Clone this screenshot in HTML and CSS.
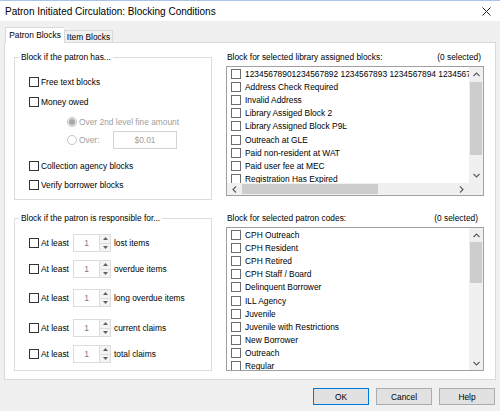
FILE: index.html
```html
<!DOCTYPE html>
<html>
<head>
<meta charset="utf-8">
<link rel="stylesheet" href="styles.css">
</head>
<body>
<div class="window">
  <div class="titlebar">
    <span class="title">Patron Initiated Circulation: Blocking Conditions</span>
    <svg class="close" width="9" height="9" viewBox="0 0 9 9"><path d="M0.5 0.5L8.5 8.5M8.5 0.5L0.5 8.5" stroke="#222" stroke-width="1" fill="none"/></svg>
  </div>
  <div class="tabs">
    <div class="tab active">Patron Blocks</div>
    <div class="tab">Item Blocks</div>
  </div>
  <div class="panel">
    <div class="left">
      <fieldset class="group g1">
        <legend>Block if the patron has...</legend>
        <div class="gbody">
          <div class="row"><span class="cb"></span><span class="lbl">Free text blocks</span></div>
          <div class="row m2"><span class="cb"></span><span class="lbl">Money owed</span></div>
          <div class="row m2 indent"><span class="radio checked"><span class="dot"></span></span><span class="lbl dis">Over 2nd level fine amount</span></div>
          <div class="row indent"><span class="radio"></span><span class="lbl dis over">Over:</span><span class="amount">$0.01</span></div>
          <div class="row m8"><span class="cb"></span><span class="lbl">Collection agency blocks</span></div>
          <div class="row m1"><span class="cb"></span><span class="lbl">Verify borrower blocks</span></div>
        </div>
      </fieldset>
      <fieldset class="group g2">
        <legend>Block if the patron is responsible for...</legend>
        <div class="gbody">
          <div class="row"><span class="cb"></span><span class="lbl least">At least</span><span class="spinval">1</span><span class="spinbtn"><span class="up"><svg width="5" height="3" viewBox="0 0 5 3"><path d="M0 3L2.5 0L5 3Z" fill="#606060"/></svg></span><span class="down"><svg width="5" height="3" viewBox="0 0 5 3"><path d="M0 0L2.5 3L5 0Z" fill="#606060"/></svg></span></span><span class="lbl what">lost items</span></div>
          <div class="row m8"><span class="cb"></span><span class="lbl least">At least</span><span class="spinval">1</span><span class="spinbtn"><span class="up"><svg width="5" height="3" viewBox="0 0 5 3"><path d="M0 3L2.5 0L5 3Z" fill="#606060"/></svg></span><span class="down"><svg width="5" height="3" viewBox="0 0 5 3"><path d="M0 0L2.5 3L5 0Z" fill="#606060"/></svg></span></span><span class="lbl what">overdue items</span></div>
          <div class="row m11"><span class="cb"></span><span class="lbl least">At least</span><span class="spinval">1</span><span class="spinbtn"><span class="up"><svg width="5" height="3" viewBox="0 0 5 3"><path d="M0 3L2.5 0L5 3Z" fill="#606060"/></svg></span><span class="down"><svg width="5" height="3" viewBox="0 0 5 3"><path d="M0 0L2.5 3L5 0Z" fill="#606060"/></svg></span></span><span class="lbl what">long overdue items</span></div>
          <div class="row m12"><span class="cb"></span><span class="lbl least">At least</span><span class="spinval">1</span><span class="spinbtn"><span class="up"><svg width="5" height="3" viewBox="0 0 5 3"><path d="M0 3L2.5 0L5 3Z" fill="#606060"/></svg></span><span class="down"><svg width="5" height="3" viewBox="0 0 5 3"><path d="M0 0L2.5 3L5 0Z" fill="#606060"/></svg></span></span><span class="lbl what">current claims</span></div>
          <div class="row m8"><span class="cb"></span><span class="lbl least">At least</span><span class="spinval">1</span><span class="spinbtn"><span class="up"><svg width="5" height="3" viewBox="0 0 5 3"><path d="M0 3L2.5 0L5 3Z" fill="#606060"/></svg></span><span class="down"><svg width="5" height="3" viewBox="0 0 5 3"><path d="M0 0L2.5 3L5 0Z" fill="#606060"/></svg></span></span><span class="lbl what">total claims</span></div>
        </div>
      </fieldset>
    </div>
    <div class="right">
      <div class="rlabel"><span>Block for selected library assigned blocks:</span><span>(0 selected)</span></div>
      <div class="listbox list1">
        <div class="items">
          <div class="item"><span class="icb"></span><span class="itxt">12345678901234567892 1234567893 1234567894 1234567895</span></div>
          <div class="item"><span class="icb"></span><span class="itxt">Address Check Required</span></div>
          <div class="item"><span class="icb"></span><span class="itxt">Invalid Address</span></div>
          <div class="item"><span class="icb"></span><span class="itxt">Library Assiged Block 2</span></div>
          <div class="item"><span class="icb"></span><span class="itxt">Library Assigned Block P9Ŀ</span></div>
          <div class="item"><span class="icb"></span><span class="itxt">Outreach at GLE</span></div>
          <div class="item"><span class="icb"></span><span class="itxt">Paid non-resident at WAT</span></div>
          <div class="item"><span class="icb"></span><span class="itxt">Paid user fee at MEC</span></div>
          <div class="item"><span class="icb"></span><span class="itxt">Registration Has Expired</span></div>
        </div>
        <div class="vscroll vs1">
          <span class="arrow"><svg width="7" height="5" viewBox="0 0 7 5"><path d="M0.5 4L3.5 1L6.5 4" stroke="#606060" stroke-width="1.2" fill="none"/></svg></span>
          <span class="vthumb t1"></span>
          <span class="fill"></span>
          <span class="arrow"><svg width="7" height="5" viewBox="0 0 7 5"><path d="M0.5 1L3.5 4L6.5 1" stroke="#606060" stroke-width="1.2" fill="none"/></svg></span>
        </div>
        <div class="hscroll">
          <span class="harrow"><svg width="5" height="7" viewBox="0 0 5 7"><path d="M4 0.5L1 3.5L4 6.5" stroke="#606060" stroke-width="1.2" fill="none"/></svg></span>
          <span class="hthumb"></span>
          <span class="fill"></span>
          <span class="harrow"><svg width="5" height="7" viewBox="0 0 5 7"><path d="M1 0.5L4 3.5L1 6.5" stroke="#606060" stroke-width="1.2" fill="none"/></svg></span>
        </div>
        <div class="corner"></div>
      </div>
      <div class="rlabel second"><span>Block for selected patron codes:</span><span>(0 selected)</span></div>
      <div class="listbox list2">
        <div class="items">
          <div class="item"><span class="icb"></span><span class="itxt">CPH Outreach</span></div>
          <div class="item"><span class="icb"></span><span class="itxt">CPH Resident</span></div>
          <div class="item"><span class="icb"></span><span class="itxt">CPH Retired</span></div>
          <div class="item"><span class="icb"></span><span class="itxt">CPH Staff / Board</span></div>
          <div class="item"><span class="icb"></span><span class="itxt">Delinquent Borrower</span></div>
          <div class="item"><span class="icb"></span><span class="itxt">ILL Agency</span></div>
          <div class="item"><span class="icb"></span><span class="itxt">Juvenile</span></div>
          <div class="item"><span class="icb"></span><span class="itxt">Juvenile with Restrictions</span></div>
          <div class="item"><span class="icb"></span><span class="itxt">New Borrower</span></div>
          <div class="item"><span class="icb"></span><span class="itxt">Outreach</span></div>
          <div class="item"><span class="icb"></span><span class="itxt">Regular</span></div>
        </div>
        <div class="vscroll vs2">
          <span class="arrow"><svg width="7" height="5" viewBox="0 0 7 5"><path d="M0.5 4L3.5 1L6.5 4" stroke="#606060" stroke-width="1.2" fill="none"/></svg></span>
          <span class="vthumb t2"></span>
          <span class="fill"></span>
          <span class="arrow"><svg width="7" height="5" viewBox="0 0 7 5"><path d="M0.5 1L3.5 4L6.5 1" stroke="#606060" stroke-width="1.2" fill="none"/></svg></span>
        </div>
      </div>
    </div>
  </div>
  <div class="footer">
    <div class="btn ok">OK</div>
    <div class="btn">Cancel</div>
    <div class="btn">Help</div>
  </div>
</div>
</body>
</html>
```

FILE: styles.css
```css
html, body {
  margin: 0;
  padding: 0;
}
body {
  width: 500px;
  height: 411px;
  overflow: hidden;
  background: #f0f0f0;
  font-family: "Liberation Sans", Arial, sans-serif;
  font-size: 8.4px;
  color: #000;
}
.window {
  width: 500px;
  height: 411px;
  display: flex;
  flex-direction: column;
}
.titlebar {
  box-sizing: border-box;
  height: 21px;
  background: #fff;
  border-top: 1px solid #a9c4e6;
  display: flex;
  align-items: center;
  justify-content: space-between;
  padding: 0 9px 0 5px;
}
.title {
  font-size: 10px;
  color: #000;
}
.close {
  display: block;
}
.tabs {
  height: 21px;
  display: flex;
  align-items: flex-end;
  padding-left: 5px;
}
.tab {
  box-sizing: border-box;
  height: 12px;
  width: 49px;
  border: 1px solid #d9d9d9;
  border-bottom: none;
  background: #f0f0f0;
  display: flex;
  align-items: center;
  justify-content: center;
  font-size: 8.4px;
}
.tab.active {
  position: relative;
  z-index: 1;
  height: 16px;
  width: 59px;
  margin-bottom: -1px;
  background: #fff;
  border-right: none;
  padding-bottom: 1px;
}
.panel {
  box-sizing: border-box;
  margin-left: 4px;
  width: 492px;
  height: 338px;
  background: #fff;
  border: 1px solid #d9d9d9;
  display: flex;
  padding: 9px 11px 0 9px;
  gap: 14px;
}
.left {
  width: 198px;
  display: flex;
  flex-direction: column;
}
fieldset.group {
  box-sizing: border-box;
  margin: 0;
  padding: 0 0 0 4px;
  border: 1px solid #dcdcdc;
  min-width: 0;
}
fieldset.g1 {
  height: 148px;
}
fieldset.g2 {
  height: 158px;
  margin-top: 13px;
}
legend {
  padding: 0 2px;
  height: 10px;
  line-height: 10px;
  font-size: 8.4px;
}
.gbody {
  padding: 11px 0 0 10px;
  display: flex;
  flex-direction: column;
}
.row {
  height: 18px;
  display: flex;
  align-items: center;
  white-space: nowrap;
}
.m1 { margin-top: 1px; }
.m2 { margin-top: 2px; }
.m8 { margin-top: 8px; }
.m11 { margin-top: 11px; }
.m12 { margin-top: 12px; }
.indent {
  padding-left: 38px;
}
.cb {
  box-sizing: border-box;
  width: 10px;
  height: 10px;
  border: 1px solid #333;
  background: #fff;
  flex: none;
}
.lbl {
  margin-left: 2px;
}
.dis {
  color: #a0a0a0;
}
.radio {
  box-sizing: border-box;
  width: 10px;
  height: 10px;
  border-radius: 50%;
  border: 1px solid #c4c4c4;
  background: #fff;
  flex: none;
  display: flex;
  align-items: center;
  justify-content: center;
}
.radio.checked {
  background: #e6e6e6;
  border-color: #c4c4c4;
}
.dot {
  width: 6px;
  height: 6px;
  border-radius: 50%;
  background: #a8a8a8;
}
.over {
  width: 34px;
}
.amount {
  box-sizing: border-box;
  width: 64px;
  height: 18px;
  border: 1px solid #d4d4d4;
  color: #a0a0a0;
  display: flex;
  align-items: center;
  justify-content: center;
}
.least {
  width: 32px;
}
.spinval {
  box-sizing: border-box;
  width: 26px;
  height: 18px;
  border: 1px solid #dcdcdc;
  border-right: none;
  display: flex;
  align-items: center;
  justify-content: center;
  color: #7a7a7a;
}
.spinbtn {
  box-sizing: border-box;
  width: 12px;
  height: 18px;
  border: 1px solid #dcdcdc;
  display: flex;
  flex-direction: column;
  background: #fff;
}
.spinbtn .up, .spinbtn .down {
  flex: 1;
  display: flex;
  align-items: center;
  justify-content: center;
  background: #f4f4f4;
}
.spinbtn .up {
  border-bottom: 1px solid #dcdcdc;
}
.spinbtn svg {
  display: block;
}
.what {
  margin-left: 3px;
}
.right {
  width: 258px;
  display: flex;
  flex-direction: column;
}
.rlabel {
  height: 10px;
  line-height: 10px;
  display: flex;
  justify-content: space-between;
  padding: 0 3px 0 1px;
  white-space: nowrap;
}
.rlabel.second {
  margin-top: 17px;
  padding-right: 6px;
}
.listbox {
  box-sizing: border-box;
  margin-top: 4px;
  border: 1px solid #a0a0a0;
  display: grid;
  grid-template-columns: 1fr 14px;
  overflow: hidden;
  background: #fff;
}
.list1 {
  height: 130px;
  grid-template-rows: 1fr 12px;
}
.list2 {
  height: 144px;
  grid-template-rows: 1fr;
}
.items {
  overflow: hidden;
  display: flex;
  flex-direction: column;
  min-width: 0;
}
.item {
  height: 13.2px;
  flex: none;
  display: flex;
  align-items: center;
  white-space: nowrap;
}
.icb {
  box-sizing: border-box;
  width: 10px;
  height: 10px;
  border: 1px solid #6d6d6d;
  background: #fff;
  margin-left: 4px;
  flex: none;
}
.itxt {
  margin-left: 4px;
}
.vscroll {
  background: #f0f0f0;
  display: flex;
  flex-direction: column;
}
.arrow {
  height: 15px;
  flex: none;
  display: flex;
  align-items: center;
  justify-content: center;
}
.arrow svg, .harrow svg {
  display: block;
}
.vthumb {
  flex: none;
  margin: 0 1px;
  background: #cdcdcd;
}
.t1 { height: 73px; }
.vs2 .arrow { height: 14px; }
.t2 { height: 41px; }
.fill {
  flex: 1;
}
.hscroll {
  background: #f0f0f0;
  display: flex;
}
.harrow {
  width: 15px;
  flex: none;
  display: flex;
  align-items: center;
  justify-content: center;
}
.hthumb {
  width: 136px;
  flex: none;
  margin: 1px 0;
  background: #cdcdcd;
}
.corner {
  background: #f0f0f0;
}
.footer {
  margin-top: 8px;
  display: flex;
  justify-content: flex-end;
  gap: 7px;
  padding-right: 5px;
}
.btn {
  box-sizing: border-box;
  width: 56px;
  height: 17px;
  border: 1px solid #adadad;
  background: #e1e1e1;
  display: flex;
  align-items: center;
  justify-content: center;
  font-size: 8.4px;
}
.btn.ok {
  border-color: #0078d7;
}
```
